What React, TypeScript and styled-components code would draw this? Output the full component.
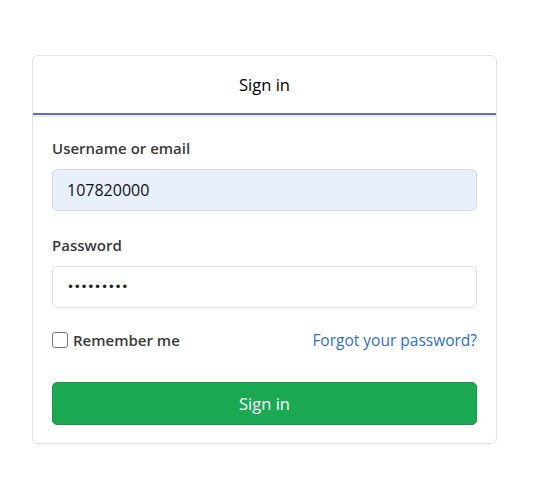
import React from "react";
import styled, { createGlobalStyle } from "styled-components";

const Global = createGlobalStyle`
  html, body { margin: 0; padding: 0; background: #fff; }
  body { font-family: "Open Sans", "Noto Sans", sans-serif; color: #212529; }
  * { box-sizing: border-box; }
`;

const Page = styled.div`
  padding: 55px 45px 0 32px;
`;

const Card = styled.div`
  width: 465px;
  border: 1px solid #dee2e6;
  border-radius: 6px;
  background: #fff;
`;

const Header = styled.div`
  border-bottom: 2px solid #ececec;
`;

const Tab = styled.div`
  height: 59px;
  display: flex;
  align-items: center;
  justify-content: center;
  font-size: 16.5px;
  font-weight: 500;
  color: #000;
  border-bottom: 2px solid #6a66c6;
`;

const Body = styled.div`
  padding: 21px 19px 18px 19px;
  display: flex;
  flex-direction: column;
`;

const Label = styled.div`
  font-size: 15px;
  font-weight: 600;
  color: #3a3a3a;
  margin-bottom: 11px;
  line-height: 20px;
`;

const Input = styled.div<{ $filled?: boolean }>`
  height: 42px;
  border: 1px solid ${(p) => (p.$filled ? "#d4dbe6" : "#dee2e6")};
  border-radius: 5px;
  background: ${(p) => (p.$filled ? "#e8f0fe" : "#fff")};
  display: flex;
  align-items: center;
  padding-left: 14px;
  font-size: 16px;
  color: #111;
  margin-bottom: 24px;
`;

const Dots = styled.span`
  font-size: 12px;
  letter-spacing: -0.3px;
  font-family: "DejaVu Sans", sans-serif;
  color: #222;
`;

const Row = styled.div`
  display: flex;
  align-items: center;
  justify-content: space-between;
  margin-top: -3px;
  margin-bottom: 31px;
`;

const Check = styled.label`
  display: flex;
  align-items: center;
  gap: 5px;
  font-size: 15px;
  font-weight: 600;
  color: #3a3a3a;
`;

const Box = styled.span`
  width: 16px;
  height: 16px;
  border: 1px solid #767676;
  border-radius: 3px;
  background: #fff;
`;

const Link = styled.a`
  font-size: 15.5px;
  color: #2f6fc9;
  text-decoration: none;
`;

const Button = styled.button`
  height: 43px;
  border: 1px solid #17994a;
  border-radius: 5px;
  background: #1aa853;
  color: #fff;
  font-family: inherit;
  font-size: 16.5px;
  cursor: pointer;
`;

export default function App() {
  return (
    <>
      <Global />
      <Page>
        <Card>
          <Header>
            <Tab>Sign in</Tab>
          </Header>
          <Body>
            <Label>Username or email</Label>
            <Input $filled>107820000</Input>
            <Label>Password</Label>
            <Input>
              <Dots>•••••••••</Dots>
            </Input>
            <Row>
              <Check>
                <Box />
                Remember me
              </Check>
              <Link href="#">Forgot your password?</Link>
            </Row>
            <Button>Sign in</Button>
          </Body>
        </Card>
      </Page>
    </>
  );
}
